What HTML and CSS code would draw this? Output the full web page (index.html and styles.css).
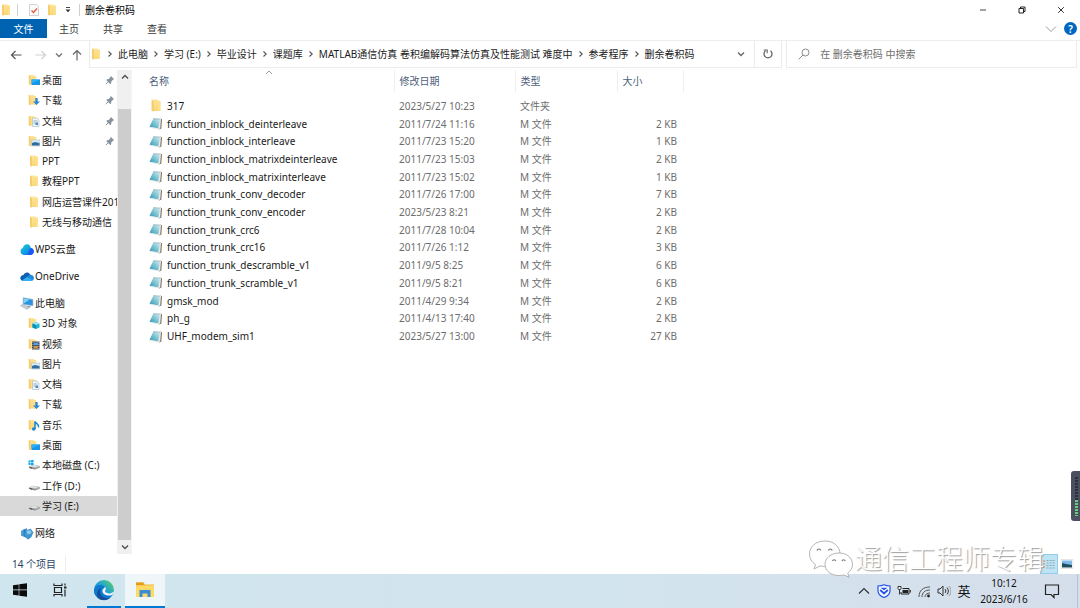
FILE: index.html
```html
<!DOCTYPE html>
<html lang="zh-CN">
<head>
<meta charset="utf-8">
<meta name="viewport" content="width=device-width, initial-scale=1">
<title>删余卷积码</title>
<link rel="stylesheet" href="styles.css">
</head>
<body>
<svg class="sprite" aria-hidden="true">
  <defs>
    <linearGradient id="gFolder" x1="0" y1="0" x2="1" y2="1"><stop offset="0" stop-color="#ffeaa8"/><stop offset="1" stop-color="#f8cf66"/></linearGradient>
    <linearGradient id="gNote" x1="1" y1="0" x2="0" y2="1"><stop offset="0" stop-color="#d8f0f5"/><stop offset="0.5" stop-color="#7cc4d4"/><stop offset="1" stop-color="#2f93ad"/></linearGradient>
    <linearGradient id="gEdgeA" x1="0" y1="1" x2="1" y2="0"><stop offset="0" stop-color="#0b62b8"/><stop offset="0.5" stop-color="#1c9fdc"/><stop offset="1" stop-color="#5fd45c"/></linearGradient>
    <linearGradient id="gWps" x1="0" y1="0" x2="1" y2="1"><stop offset="0" stop-color="#18d3d0"/><stop offset="1" stop-color="#0a6cf5"/></linearGradient>
  </defs>
  <symbol id="folder" viewBox="0 0 12 12"><path d="M2 0.5h5.5v1H10V11H3.5L2 10.5z" fill="url(#gFolder)"/><path d="M2 0.5l2 1.5v9.8L2 10.8z" fill="#f5cd6c"/><path d="M7.5 2H10v9H7.5z" fill="#ffe08a"/></symbol>
  <symbol id="f-desktop" viewBox="0 0 12 12"><use href="#folder" x="-1" width="11" height="12"/><path d="M3.5 5.5h8.5v5.5H3.5z" fill="#1696e8"/><path d="M3.5 5.5H12l-8.500 4z" fill="#2cb0f6"/></symbol>
  <symbol id="f-down" viewBox="0 0 12 12"><use href="#folder" x="-1" width="11" height="12"/><path d="M7.300 4h2.400v3.500H12L8.500 11 5 7.500h2.300z" fill="#2d86d8"/></symbol>
  <symbol id="f-doc" viewBox="0 0 12 12"><use href="#folder" x="-1" width="11" height="12"/><path d="M4.500 3h4.500l2 2v6.500H4.500z" fill="#eef5fa" stroke="#a9b8c4" stroke-width=".6"/><path d="M5.500 6h4M5.500 8h2" stroke="#7d9cb5" stroke-width=".8"/><path d="M7.500 7.500h2.500v2.500H7.500z" fill="#3f8fc4"/></symbol>
  <symbol id="f-pic" viewBox="0 0 12 12"><use href="#folder" x="-1" width="11" height="12"/><path d="M3.500 5h8.500v6H3.500z" fill="#d9ecfa" stroke="#9db4c5" stroke-width=".5"/><path d="M4 8l3-1 4.500 1v2.500H4z" fill="#2f6d9e"/></symbol>
  <symbol id="f-3d" viewBox="0 0 12 12"><use href="#folder" x="-1" width="11" height="12"/><path d="M8 5l3.500 1.500v4L8 12l-3.500-1.500v-4z" fill="#18b4d8"/><path d="M8 5l3.500 1.500L8 8 4.500 6.500z" fill="#9be7f5"/><path d="M4.500 6.500L8 8v4l-3.500-1.500z" fill="#0a8fb5"/></symbol>
  <symbol id="f-video" viewBox="0 0 12 12"><use href="#folder" x="-1" width="11" height="12"/><path d="M4 3.500h7.500v8H4z" fill="#3d4654"/><path d="M5.500 4.500H10v2.700H5.500z" fill="#5b9fe0"/><path d="M5.500 8H10v2.700H5.500z" fill="#c7964c"/><path d="M4.700 4v7M10.800 4v7" stroke="#dde2e8" stroke-width=".6" stroke-dasharray="1 1"/></symbol>
  <symbol id="f-music" viewBox="0 0 12 12"><use href="#folder" x="-1" width="11" height="12"/><path d="M7 10V2.500C8 5 11.500 5 10.500 8.500" fill="none" stroke="#1485e0" stroke-width="1.500"/><circle cx="5.700" cy="10" r="1.700" fill="#1485e0"/></symbol>
  <symbol id="wps" viewBox="0 0 13 11"><path d="M3.500 10.500a3.300 3.300 0 0 1-.8-6.400C3.300 1.500 5 .5 6.700.7c2 .2 3 1.500 3.300 3.300 2 .3 2.900 1.700 2.800 3.300-.1 1.900-1.400 3.200-3.300 3.200z" fill="url(#gWps)"/><path d="M6 10.500c3 0 1.500-5.500 4.500-6.300 1.500.4 2.300 1.700 2.300 3.100-.1 1.900-1.400 3.200-3.300 3.200z" fill="#1b59f0"/></symbol>
  <symbol id="onedrive" viewBox="0 0 14 10"><path d="M3.500 3.500C4.500.7 8.500 0 10.200 3.200c2 .2 3.500 1.400 3.500 3.300S12 9.500 10.500 9.500h-7C1.500 9.500.3 8.300.3 6.600S1.600 3.500 3.500 3.500z" fill="#0f5fb4"/><path d="M2 9L10 3.300c2.200.1 3.700 1.400 3.700 3.300S12 9.500 10.500 9.500h-7z" fill="#1c8fe0"/><path d="M2 9l5-3.200 5.800 3c-.7.500-1.500.7-2.300.7h-7z" fill="#35b1f3"/></symbol>
  <symbol id="pc" viewBox="0 0 13 12"><path d="M3 .7l9 1.500V8L3 6.800z" fill="#2a94e0" stroke="#8db2cc" stroke-width=".6"/><path d="M3.500 1.300L9 2.200 3.500 6z" fill="#86cef5"/><path d="M6 8l4 .5v1.300l-3 .2z" fill="#9ba5ad"/><path d="M.5 8l2-1.200 6 3-1.800 1.700z" fill="#cbd3d8" stroke="#8d989f" stroke-width=".4"/></symbol>
  <symbol id="disk" viewBox="0 0 13 12"><path d="M1 7.500l5-1.700 6.500 1.400v1.700L7.500 11 1 9.200z" fill="#85898b"/><path d="M1 7.500l5-1.700 6.500 1.400-5 1.800z" fill="#dfe1e1"/><path d="M7.500 9l5-1.700v1.500L7.500 10.800z" fill="#a9acad"/><path d="M2 8.700l2.500.7" stroke="#3d4142" stroke-width="1"/></symbol>
  <symbol id="disk-c" viewBox="0 0 13 12"><use href="#disk" width="13" height="12"/><path d="M.5 1.300l2.300-.4v2.300H.5zM3.300.8L6 .4v2.800H3.300zM.5 3.700h2.300V6L.5 5.600zM3.300 3.700H6v2.700l-2.700-.3z" fill="#0aa7ec"/></symbol>
  <symbol id="network" viewBox="0 0 13 12"><path d="M1 3.500L6.500 1v9L1 8z" fill="#4a9bd4"/><path d="M3.500 2l5 2v7.500l-5-3z" fill="#2678b8"/><path d="M5 3l5-1.500L12.500 5 10.500 9.500 7 11.500 4 7.500z" fill="#3f95d0"/><path d="M6 3.500l3.500-.5 1.500 2.500L7 7z" fill="#8fcbf0"/></symbol>
  <symbol id="note" viewBox="0 0 14 13"><path d="M11 1.500l2 .8-.7 9.500-2.500.7z" fill="#7b7163"/><path d="M10.500 1.500l1.500.6-.8 9.400-1.700.8z" fill="#eeeae2"/><path d="M4.500 1.300l6.500.4-1.600 9.800-8.900-1.800z" fill="url(#gNote)"/><path d="M4.500 1.300l6.500.4-.2 1-6.700-.4z" fill="#afbfc5"/><path d="M.5 10.200L9 11.900" stroke="#d8e5ea" stroke-width=".7"/></symbol>
  <symbol id="pin" viewBox="0 0 10 10"><path d="M5.700.8l3.500 3.500-1 .3-1.900 1.900-.2 1.900-1 .5L1.400 5.200l.5-1 1.900-.2 1.700-2.100z" fill="#87939f"/><path d="M3.200 6.800L.8 9.200" stroke="#87939f" stroke-width="1"/></symbol>
  <symbol id="down" viewBox="0 0 10 10"><path d="M2 3.500l3 3 3-3" fill="none" stroke="currentColor" stroke-width="1.400"/></symbol>
  <symbol id="up" viewBox="0 0 10 10"><path d="M2 6.500l3-3 3 3" fill="none" stroke="currentColor" stroke-width="1.400"/></symbol>
  <symbol id="right" viewBox="0 0 10 10"><path d="M3.500 2.500L6.200 5 3.500 7.500" fill="none" stroke="currentColor" stroke-width="1.100"/></symbol>
</svg>

<header class="titlebar">
  <svg class="i12" aria-hidden="true"><use href="#folder"/></svg>
  <span class="bar"></span>
  <button class="quick" aria-label="属性"><svg width="12" height="12" viewBox="0 0 12 12"><path d="M1.500.5h7l2 2v9h-9z" fill="#fbfbfb" stroke="#bcc2c8" stroke-width=".7"/><path d="M3.500 6.500l2 2L9 4.500" fill="none" stroke="#e35b38" stroke-width="1.400"/></svg></button>
  <button class="quick" aria-label="新建文件夹"><svg class="i12"><use href="#folder"/></svg></button>
  <button class="quick quick-menu" aria-label="自定义快速访问工具栏"><svg width="8" height="8" viewBox="0 0 8 8"><path d="M2 1.500h4" stroke="#444"/><path d="M1.500 3.500h5L4 6.300z" fill="#333"/></svg></button>
  <span class="bar"></span>
  <h1 class="title">删余卷积码</h1>
  <div class="window-controls">
    <button aria-label="最小化"><svg width="10" height="10" viewBox="0 0 10 10"><path d="M2 5h6" stroke="#666" stroke-width="1.200"/></svg></button>
    <button aria-label="还原"><svg width="10" height="10" viewBox="0 0 10 10"><path d="M2 3.500h4.500V8H2zM3.500 3.300V2H8v4.500H6.700" fill="none" stroke="#222"/></svg></button>
    <button aria-label="关闭"><svg width="10" height="10" viewBox="0 0 10 10"><path d="M2.200 2.200l5.600 5.600M7.800 2.200L2.200 7.800" stroke="#333"/></svg></button>
  </div>
</header>

<nav class="ribbon" aria-label="功能区">
  <button class="tab tab-file">文件</button>
  <button class="tab">主页</button>
  <button class="tab">共享</button>
  <button class="tab">查看</button>
  <div class="ribbon-end">
    <button aria-label="展开功能区"><svg width="12" height="12" viewBox="0 0 12 12"><path d="M1 3.500l5 5 5-5" fill="none" stroke="#9a9a9a"/></svg></button>
    <button class="help" aria-label="帮助">?</button>
  </div>
</nav>

<div class="address-row">
  <div class="history">
    <button aria-label="后退"><svg width="12" height="12" viewBox="0 0 12 12"><path d="M11.500 6H1.500M5.500 2L1.500 6l4 4" fill="none" stroke="#555" stroke-width="1.200"/></svg></button>
    <button aria-label="前进"><svg width="12" height="12" viewBox="0 0 12 12"><path d="M.5 6h10M6.500 2l4 4-4 4" fill="none" stroke="#cfcfcf" stroke-width="1.100"/></svg></button>
    <button class="recent" aria-label="最近浏览的位置"><svg class="i10"><use href="#down"/></svg></button>
    <button aria-label="上移"><svg width="12" height="12" viewBox="0 0 12 12"><path d="M6 11.500v-10M2 5.500l4-4 4 4" fill="none" stroke="#666" stroke-width="1.200"/></svg></button>
  </div>
  <div class="address">
    <ol class="crumbs">
      <li><svg class="i12" aria-hidden="true"><use href="#folder"/></svg></li>
      <li><svg class="i10" aria-hidden="true"><use href="#right"/></svg><a href="#">此电脑</a></li>
      <li><svg class="i10" aria-hidden="true"><use href="#right"/></svg><a href="#">学习 (E:)</a></li>
      <li><svg class="i10" aria-hidden="true"><use href="#right"/></svg><a href="#">毕业设计</a></li>
      <li><svg class="i10" aria-hidden="true"><use href="#right"/></svg><a href="#">课题库</a></li>
      <li><svg class="i10" aria-hidden="true"><use href="#right"/></svg><a href="#">MATLAB通信仿真 卷积编解码算法仿真及性能测试 难度中</a></li>
      <li><svg class="i10" aria-hidden="true"><use href="#right"/></svg><a href="#">参考程序</a></li>
      <li><svg class="i10" aria-hidden="true"><use href="#right"/></svg><a href="#">删余卷积码</a></li>
    </ol>
    <button class="address-drop" aria-label="以前的位置"><svg class="i10"><use href="#down"/></svg></button>
    <button class="refresh" aria-label="刷新"><svg width="12" height="12" viewBox="0 0 12 12"><path d="M3.500 2.800a4 4 0 1 0 5 0" fill="none" stroke="#666" stroke-width="1.300"/><path d="M1.700 2h3.500v3.300" fill="none" stroke="#666" stroke-width="1.100"/></svg></button>
  </div>
  <label class="search">
    <svg width="12" height="12" viewBox="0 0 12 12" aria-hidden="true"><circle cx="7.500" cy="4.500" r="3.500" fill="none" stroke="#8a8a8a"/><path d="M5 7L.8 11.200" stroke="#8a8a8a"/></svg>
    <input type="search" placeholder="在 删余卷积码 中搜索" aria-label="搜索">
  </label>
</div>

<main class="main">
  <nav class="tree" aria-label="导航窗格">
    <ul class="group quick-access">
      <li><svg class="i12"><use href="#f-desktop"/></svg><a href="#">桌面</a><svg class="pin"><use href="#pin"/></svg></li>
      <li><svg class="i12"><use href="#f-down"/></svg><a href="#">下载</a><svg class="pin"><use href="#pin"/></svg></li>
      <li><svg class="i12"><use href="#f-doc"/></svg><a href="#">文档</a><svg class="pin"><use href="#pin"/></svg></li>
      <li><svg class="i12"><use href="#f-pic"/></svg><a href="#">图片</a><svg class="pin"><use href="#pin"/></svg></li>
      <li><svg class="i12"><use href="#folder"/></svg><a href="#">PPT</a></li>
      <li><svg class="i12"><use href="#folder"/></svg><a href="#">教程PPT</a></li>
      <li><svg class="i12"><use href="#folder"/></svg><a href="#">网店运营课件201</a></li>
      <li><svg class="i12"><use href="#folder"/></svg><a href="#">无线与移动通信</a></li>
    </ul>
    <ul class="group"><li class="root"><svg class="i14"><use href="#wps"/></svg><a href="#">WPS云盘</a></li></ul>
    <ul class="group"><li class="root"><svg class="i14"><use href="#onedrive"/></svg><a href="#">OneDrive</a></li></ul>
    <ul class="group computer">
      <li class="root"><svg class="i14"><use href="#pc"/></svg><a href="#">此电脑</a></li>
      <li><svg class="i12"><use href="#f-3d"/></svg><a href="#">3D 对象</a></li>
      <li><svg class="i12"><use href="#f-video"/></svg><a href="#">视频</a></li>
      <li><svg class="i12"><use href="#f-pic"/></svg><a href="#">图片</a></li>
      <li><svg class="i12"><use href="#f-doc"/></svg><a href="#">文档</a></li>
      <li><svg class="i12"><use href="#f-down"/></svg><a href="#">下载</a></li>
      <li><svg class="i12"><use href="#f-music"/></svg><a href="#">音乐</a></li>
      <li><svg class="i12"><use href="#f-desktop"/></svg><a href="#">桌面</a></li>
      <li><svg class="i12"><use href="#disk-c"/></svg><a href="#">本地磁盘 (C:)</a></li>
      <li><svg class="i12"><use href="#disk"/></svg><a href="#">工作 (D:)</a></li>
      <li class="selected"><svg class="i12"><use href="#disk"/></svg><a href="#">学习 (E:)</a></li>
    </ul>
    <ul class="group"><li class="root"><svg class="i14"><use href="#network"/></svg><a href="#">网络</a></li></ul>
  </nav>
  <div class="scrollbar">
    <button class="scroll-up" aria-label="向上滚动"><svg class="i10"><use href="#up"/></svg></button>
    <div class="thumb"></div>
    <button aria-label="向下滚动"><svg class="i10"><use href="#down"/></svg></button>
  </div>
  <section class="files">
    <table>
      <thead><tr><th class="c-name">名称<svg class="sort" viewBox="0 0 8 5" aria-hidden="true"><path d="M1 4l3-3 3 3" fill="none" stroke="#999"/></svg></th><th class="c-date">修改日期</th><th class="c-type">类型</th><th class="c-size">大小</th></tr></thead>
    </table>
    <table class="rows">
      <tbody>
        <tr><td class="c-name"><span><svg class="i14"><use href="#folder"/></svg>317</span></td><td class="c-date">2023/5/27 10:23</td><td class="c-type">文件夹</td><td class="c-size"></td></tr>
        <tr><td class="c-name"><span><svg class="i14"><use href="#note"/></svg>function_inblock_deinterleave</span></td><td>2011/7/24 11:16</td><td>M 文件</td><td class="c-size">2 KB</td></tr>
        <tr><td class="c-name"><span><svg class="i14"><use href="#note"/></svg>function_inblock_interleave</span></td><td>2011/7/23 15:20</td><td>M 文件</td><td class="c-size">1 KB</td></tr>
        <tr><td class="c-name"><span><svg class="i14"><use href="#note"/></svg>function_inblock_matrixdeinterleave</span></td><td>2011/7/23 15:03</td><td>M 文件</td><td class="c-size">2 KB</td></tr>
        <tr><td class="c-name"><span><svg class="i14"><use href="#note"/></svg>function_inblock_matrixinterleave</span></td><td>2011/7/23 15:02</td><td>M 文件</td><td class="c-size">1 KB</td></tr>
        <tr><td class="c-name"><span><svg class="i14"><use href="#note"/></svg>function_trunk_conv_decoder</span></td><td>2011/7/26 17:00</td><td>M 文件</td><td class="c-size">7 KB</td></tr>
        <tr><td class="c-name"><span><svg class="i14"><use href="#note"/></svg>function_trunk_conv_encoder</span></td><td>2023/5/23 8:21</td><td>M 文件</td><td class="c-size">2 KB</td></tr>
        <tr><td class="c-name"><span><svg class="i14"><use href="#note"/></svg>function_trunk_crc6</span></td><td>2011/7/28 10:04</td><td>M 文件</td><td class="c-size">2 KB</td></tr>
        <tr><td class="c-name"><span><svg class="i14"><use href="#note"/></svg>function_trunk_crc16</span></td><td>2011/7/26 1:12</td><td>M 文件</td><td class="c-size">3 KB</td></tr>
        <tr><td class="c-name"><span><svg class="i14"><use href="#note"/></svg>function_trunk_descramble_v1</span></td><td>2011/9/5 8:25</td><td>M 文件</td><td class="c-size">6 KB</td></tr>
        <tr><td class="c-name"><span><svg class="i14"><use href="#note"/></svg>function_trunk_scramble_v1</span></td><td>2011/9/5 8:21</td><td>M 文件</td><td class="c-size">6 KB</td></tr>
        <tr><td class="c-name"><span><svg class="i14"><use href="#note"/></svg>gmsk_mod</span></td><td>2011/4/29 9:34</td><td>M 文件</td><td class="c-size">2 KB</td></tr>
        <tr><td class="c-name"><span><svg class="i14"><use href="#note"/></svg>ph_g</span></td><td>2011/4/13 17:40</td><td>M 文件</td><td class="c-size">2 KB</td></tr>
        <tr><td class="c-name"><span><svg class="i14"><use href="#note"/></svg>UHF_modem_sim1</span></td><td>2023/5/27 13:00</td><td>M 文件</td><td class="c-size">27 KB</td></tr>
      </tbody>
    </table>
  </section>
</main>

<footer class="status">
  <span class="count">14 个项目</span>
  <div class="views">
    <button class="view active" aria-label="详细信息"><svg width="18" height="18" viewBox="0 0 18 18"><path d="M3 6h2M3 9h2M3 12h2" stroke="#d99a86" stroke-width="1.300"/><path d="M6.500 5.500h8M6.500 8h8M6.500 10.500h8M6.500 13h8" stroke="#91a8b3" stroke-dasharray="2 1"/></svg></button>
    <button class="view" aria-label="大图标"><svg width="14" height="12" viewBox="0 0 14 12"><path d="M1 1.500h12v9H1z" fill="#fff" stroke="#ccc" stroke-width=".5"/><path d="M2 2.500h10V9H2z" fill="#7dbbe9"/><path d="M2 5l4 1 6 1v2.500H2z" fill="#214f60"/></svg></button>
  </div>
</footer>

<footer class="taskbar">
  <div class="apps">
    <button class="app" aria-label="开始"><svg width="16" height="16" viewBox="0 0 16 16"><path d="M1 3.200l5.700-.8v5.200H1zM7.300 2.300L15 1.200v6.400H7.300zM1 8.300h5.700v5.200L1 12.800zM7.300 8.300H15v6.400l-7.700-1z" fill="#0b0b0b"/></svg></button>
    <button class="app" aria-label="任务视图"><svg width="16" height="16" viewBox="0 0 16 16"><path d="M2 1.500v2h8v-2M2 14.500v-2h8v2M2.500 5.500h7v5h-7zM13 1.500v2M13 7.500v7" fill="none" stroke="#222" stroke-width="1.200"/><path d="M12 4.500h2.500v2H12z" fill="#222"/></svg></button>
    <button class="app running" aria-label="Microsoft Edge"><svg width="22" height="22" viewBox="0 0 22 22"><circle cx="11" cy="11" r="10" fill="url(#gEdgeA)"/><path d="M1 11c1-5 8-6.500 11-3 1.200 1.600.8 2.700.2 3.600-.7 1.700 1.800 3 4.600 2.800 2-.2 3.200-1.100 3.900-2.200-.2 1.600-1 3.400-2.200 4.900C15 21 9 22.500 4.500 18.600 1.800 16.300.8 13.800 1 11z" fill="#0d7bd0"/><path d="M8.500 8.500c-2 2-2.200 6.500 1.500 9.300 2.700 2 6 1.400 7.800.2C14.500 22.500 8 21.600 5.500 19.500c-3-3.200-1.500-9.500 3-11z" fill="#164f9c"/><path d="M12 8c1.600 1.600.8 2.700.2 3.600-.7 1.700 1.800 3 4.600 2.800 1.500-.1 2.800-.8 3.600-1.600l.6.400c-1 3-3.500 3.500-6 3.300-4-.4-6.500-3-5.300-6z" fill="#edf7fa"/></svg></button>
    <button class="app running current" aria-label="文件资源管理器"><svg width="20" height="18" viewBox="0 0 20 18"><path d="M1 1.500h7.500l1.500 2h9v12.500H1z" fill="#f0b83b"/><path d="M1 1.500h7.500V4H1z" fill="#e29c15"/><path d="M1 4.500h18V16H1z" fill="#ffd968"/><path d="M4.500 16V9h11v7h-3v-3.500h-5V16z" fill="#3a8dd2"/></svg></button>
  </div>
  <div class="tray">
    <button aria-label="显示隐藏的图标"><svg width="14" height="14" viewBox="0 0 14 14"><path d="M2 9.500l5-5 5 5" fill="none" stroke="#333" stroke-width="1.200"/></svg></button>
    <button aria-label="安全中心"><svg width="14" height="14" viewBox="0 0 14 14"><path d="M7 .8c2 1 4 1.200 6 1.200v4.500c0 3.500-2.500 5.700-6 7-3.500-1.300-6-3.500-6-7V2C3 2 5 1.800 7 .8z" fill="#f7faff" stroke="#2452e6" stroke-width="1.200"/><path d="M3.500 3.800h7L7 6.300z" fill="#2452e6"/><path d="M3.200 6L7 9.500 10.800 6" fill="none" stroke="#2452e6" stroke-width="1.700"/></svg></button>
    <button aria-label="电池"><svg width="14" height="14" viewBox="0 0 14 14"><path d="M5.500 4.500H12v5.500H4V8" fill="none" stroke="#222"/><path d="M5.500 6H11v3H5.500z" fill="#222"/><path d="M13.300 6v2.500" stroke="#222"/><path d="M1 2.500v2.200c0 1.300 3 1.300 3 0V2.500zM2.500 5.500v5" fill="#eee" stroke="#222" stroke-width=".9"/></svg></button>
    <button aria-label="网络"><svg width="14" height="14" viewBox="0 0 14 14"><path d="M2 13C2 6.500 6 3 13 3M5 13c0-4.500 3-7 8-7M8 13c0-2.500 2-4 5-4" fill="none" stroke="#555"/><circle cx="11.500" cy="12" r="1.400" fill="#222"/></svg></button>
    <button aria-label="音量"><svg width="14" height="14" viewBox="0 0 14 14"><path d="M1 5h2l3-3v10L3 9H1z" fill="none" stroke="#333"/><path d="M8 5c1 1 1 3 0 4M10 3.500c1.800 2 1.800 5 0 7" fill="none" stroke="#333"/><path d="M12 2c2.500 3 2.500 7 0 10" fill="none" stroke="#999"/></svg></button>
    <button class="ime">英</button>
    <button class="clock"><time>10:12</time><time>2023/6/16</time></button>
    <button class="notify" aria-label="通知"><svg width="16" height="16" viewBox="0 0 16 16"><path d="M1.500 2h13v9.500H10v3l-3-3H1.500z" fill="none" stroke="#222" stroke-width="1.200"/></svg></button>
  </div>
</footer>

<aside class="meter" aria-hidden="true"><span class="level idle"></span><span class="level live"></span></aside>
<div class="watermark">
  <svg width="46" height="38" viewBox="0 0 46 38" aria-hidden="true"><g fill="#fff" stroke="#a2a2a2" stroke-width=".8"><path d="M17 1C8 1 1.500 6.500 1.500 14c0 4.500 2.200 8 6 10.500L6 29l6-3c12 2 20-3 20-12C32 6.500 25.500 1 17 1z"/><path d="M31 13c-8 0-14 5-14 11.500S23 35.500 31 35.500c1.700 0 3.300-.2 5-.6l5 2.300-1.300-4c3-2.200 4.800-5.200 4.800-8.700C44.500 18 39 13 31 13z"/></g><g fill="none" stroke="#777" stroke-width="1.200"><path d="M9 10.500c.5-2 3.200-2 3.700 0M20.500 10.500c.5-2 3.200-2 3.700 0M24.500 21c.4-1.700 2.800-1.700 3.200 0M34 21c.4-1.700 2.800-1.700 3.200 0"/></g></svg>
  <span>通信工程师专辑</span>
</div>
</body>
</html>
```
FILE: styles.css
```css
* { box-sizing: border-box; }

body {
  margin: 0;
  height: 100vh;
  display: flex;
  flex-direction: column;
  position: relative;
  overflow: hidden;
  background: #fff;
  color: #191919;
  font: 10px/16px "Noto Sans", "Noto Sans CJK SC", sans-serif;
}

button, input { font: inherit; color: inherit; }
button { border: 0; padding: 0; background: none; display: flex; align-items: center; justify-content: center; }
a { color: inherit; text-decoration: none; }
ul, ol { list-style: none; margin: 0; padding: 0; }
svg { flex: none; display: block; }

.sprite { position: absolute; width: 0; height: 0; }
.i10 { width: 10px; height: 10px; }
.i12 { width: 12px; height: 12px; }
.i14 { width: 14px; height: 13px; }

/* Title bar */
.titlebar { display: flex; align-items: center; height: 19px; }
.bar { width: 1px; height: 12px; margin: 0 5px; background: #cfcfcf; }
.titlebar .bar:first-of-type { margin-right: 10px; }
.quick { margin-right: 6px; }
.quick-menu { width: 8px; margin: 0 2px 0 0; }
.title { margin: 0; font-size: 10px; font-weight: 400; color: #000; }
.window-controls { display: flex; margin-left: auto; }
.window-controls button { width: 39px; height: 18px; }

/* Ribbon */
.ribbon { display: flex; height: 22px; padding-bottom: 2px; border-bottom: 1px solid #ededed; }
.tab { width: 44px; color: #3b3b3b; }
.tab-file { width: 47px; background: #0063b1; color: #fff; }
.ribbon-end { display: flex; align-items: center; gap: 7px; margin-left: auto; padding-right: 3px; }
.help { width: 13px; height: 13px; border-radius: 50%; background: #0067c0; color: #fff; font-weight: 600; }

/* Address bar */
.address-row { display: flex; height: 27px; padding-right: 3px; }
.history { display: flex; align-items: center; gap: 7px; width: 89px; padding-left: 10px; }
.history button:nth-child(2) { margin-left: 6px; }
.recent { color: #777; }
.address { flex: 1; display: flex; border: 1px solid #ececec; border-top: 0; min-width: 0; }
.crumbs { flex: 1; display: flex; align-items: center; min-width: 0; white-space: nowrap; color: #1c1c1c; }
.crumbs li { display: flex; align-items: center; gap: 3px; }
.crumbs li + li { margin-left: 3px; }
.crumbs svg { color: #555; }
.address-drop { width: 26px; color: #666; }
.refresh { width: 27px; border-left: 1px solid #ececec; }
.search { flex: 0 0 27%; display: flex; align-items: center; gap: 8px; margin-left: 4px; padding-left: 11px; border: 1px solid #ececec; border-top: 0; }
.search input { flex: 1; min-width: 0; border: 0; outline: 0; background: none; padding: 0 2px; }
.search input::placeholder { color: #6e6e6e; opacity: 1; }

/* Navigation pane */
.main { flex: 1; display: flex; min-height: 0; padding-top: 2px; }
.tree { width: 117px; display: flex; flex-direction: column; gap: 7px; overflow: hidden; }
.group { display: flex; flex-direction: column; flex: none; height: 20px; }
.quick-access { height: 162px; }
.computer { height: 223px; }
.group li { flex: 1; display: flex; align-items: center; gap: 2px; padding-left: 28px; white-space: nowrap; }
.group li.root { gap: 1px; padding-left: 20px; }
.group li.selected { background: #d9d9d9; }
.group li .pin { width: 10px; height: 10px; margin-left: auto; margin-right: 2px; }

.scrollbar { width: 14px; display: flex; flex-direction: column; padding-left: 1px; background: #f0f0f0; color: #505050; }
.scrollbar button { height: 14px; flex: none; }
.scrollbar .scroll-up { height: 39px; align-items: flex-start; padding-top: 2px; }
.thumb { flex: 1; background: #cdcdcd; }

/* File list */
.files { flex: 1; min-width: 0; border-left: 1px solid #f5f5f5; padding-left: 17px; }
table { width: 535px; border-collapse: collapse; table-layout: fixed; color: #6d6d6d; }
th, td { padding: 0 0 0 5px; text-align: left; font-weight: 400; }
th { height: 22px; border-right: 1px solid #efefef; color: #4c607a; }
.c-name { width: 245px; padding-left: 0; position: relative; }
.c-date { width: 121px; }
.c-type { width: 102px; }
td.c-size { text-align: right; padding-right: 7px; }
.rows { margin-top: 5px; height: 248px; }
.rows .c-name span { display: flex; align-items: center; gap: 4px; color: #191919; }
.sort { position: absolute; top: 0; left: 116px; width: 8px; height: 5px; }

/* Status bar */
.status { display: flex; align-items: center; height: 20px; color: #2b4465; }
.count { padding: 0 9px 0 12px; border-right: 1px solid #ededed; }
.views { display: flex; margin-left: auto; padding-right: 4px; }
.view { width: 18px; height: 20px; }
.view.active { background: #bde4f5; border: 1px solid #93cfea; }

/* Taskbar */
.taskbar { display: flex; justify-content: space-between; height: 34px; background: linear-gradient(90deg, #d0e6ee, #d3e4ee 60%, #d5deeb); }
.apps, .tray { display: flex; }
.app { width: 40px; border-bottom: 2px solid transparent; }
.app.running { width: 34px; margin-left: 7px; border-color: #0078d4; }
.app.running.current { width: 40px; margin-left: 4px; background: #eef6fa; }
.tray { color: #111; padding-right: 2px; }
.tray button { width: 20px; }
.tray .ime { font-size: 13px; }
.tray .clock { width: 60px; flex-direction: column; }
.tray .notify { width: 44px; padding-right: 8px; border-right: 1px solid #b5c4d1; }

/* Overlays */
.meter { position: absolute; right: 0; top: 471px; width: 9px; height: 50px; padding: 6px 2px 5px 4px; display: flex; flex-direction: column; border-radius: 3px 0 0 3px; background: #4b5060; }
.level { flex: 3; background: repeating-linear-gradient(#2c313c 0 2px, #4b5060 2px 3px); }
.level.live { flex: 2; background: repeating-linear-gradient(#68c97f 0 2px, #4b5060 2px 3px); }
.watermark { position: absolute; right: 36px; bottom: 30px; display: flex; align-items: center; gap: 1px; font-size: 27px; line-height: 38px; font-weight: 300; color: #fff; text-shadow: 1px 1px 1px #999; white-space: nowrap; }
```
